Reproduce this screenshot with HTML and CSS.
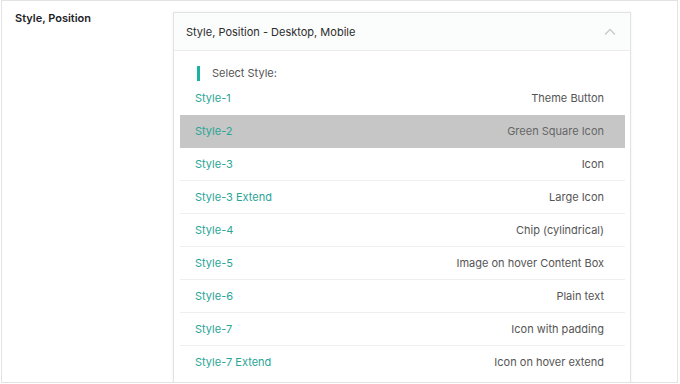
FILE: index.html
```html
<!DOCTYPE html>
<html>
<head>
<meta charset="utf-8">
<link rel="stylesheet" href="styles.css">
</head>
<body>
<div class="frame">
  <div class="field">
    <div class="label">Style, Position</div>
    <div class="card">
      <div class="card-head">
        <span class="head-title">Style, Position - Desktop, Mobile</span>
        <svg class="chev" width="12" height="8" viewBox="0 0 12 8"><path d="M1 6.5 L6 1.5 L11 6.5" fill="none" stroke="#c8c8c8" stroke-width="1.3"/></svg>
      </div>
      <div class="card-body">
        <div class="select-title"><span class="bar"></span>Select Style:</div>
        <ul class="list">
          <li class="row"><span class="name">Style-1</span><span class="desc">Theme Button</span></li>
          <li class="row active"><span class="name">Style-2</span><span class="desc">Green Square Icon</span></li>
          <li class="row"><span class="name">Style-3</span><span class="desc">Icon</span></li>
          <li class="row"><span class="name">Style-3 Extend</span><span class="desc">Large Icon</span></li>
          <li class="row"><span class="name">Style-4</span><span class="desc">Chip (cylindrical)</span></li>
          <li class="row"><span class="name">Style-5</span><span class="desc">Image on hover Content Box</span></li>
          <li class="row"><span class="name">Style-6</span><span class="desc">Plain text</span></li>
          <li class="row"><span class="name">Style-7</span><span class="desc">Icon with padding</span></li>
          <li class="row last"><span class="name">Style-7 Extend</span><span class="desc">Icon on hover extend</span></li>
        </ul>
      </div>
    </div>
  </div>
</div>
</body>
</html>
```
FILE: styles.css
```css
html, body {
  margin: 0;
  padding: 0;
  background: #ffffff;
}
body {
  font-family: Inter, "Noto Sans", sans-serif;
  font-size: 11px;
  width: 680px;
  height: 384px;
  overflow: hidden;
}
.frame {
  box-sizing: border-box;
  margin-left: 1px;
  width: 677px;
  height: 383px;
  border: 1px solid #e3e3e3;
  overflow: hidden;
  background: #fff;
}
.field {
  display: flex;
  padding: 11px 0 0 13px;
}
.label {
  width: 158px;
  font-weight: 600;
  color: #1d2327;
  font-size: 11px;
  line-height: 12px;
}
.card {
  width: 458px;
  box-sizing: border-box;
  border: 1px solid #e2e2e2;
  box-shadow: 0 0 3px rgba(0,0,0,0.06);
  background: #fff;
}
.card-head {
  height: 38px;
  box-sizing: border-box;
  display: flex;
  align-items: center;
  justify-content: space-between;
  padding: 0 14px 0 12px;
  background: #fbfcfc;
  border-bottom: 1px solid #ececec;
  color: #2c2c2c;
}
.head-title {
  font-size: 11px;
}
.chev {
  display: block;
}
.card-body {
  padding: 14px 5px 20px 6px;
}
.select-title {
  display: flex;
  align-items: center;
  height: 16px;
  padding-left: 17px;
  color: #555;
  font-size: 11px;
}
.bar {
  width: 3px;
  height: 15px;
  background: #1ab3a3;
  margin-right: 12px;
}
.list {
  list-style: none;
  margin: 1px 0 0 0;
  padding: 0;
}
.row {
  height: 33px;
  box-sizing: border-box;
  display: flex;
  align-items: center;
  justify-content: space-between;
  padding: 0 21px 0 15px;
  border-bottom: 1px solid #efefef;
}
.row:first-child,
.row.last {
  border-bottom-color: transparent;
}
.row.active {
  background: #c6c6c6;
  border-bottom-color: transparent;
}
.name {
  color: #2aa596;
}
.desc {
  color: #555;
}
.row.active .desc {
  color: #666;
}
```
